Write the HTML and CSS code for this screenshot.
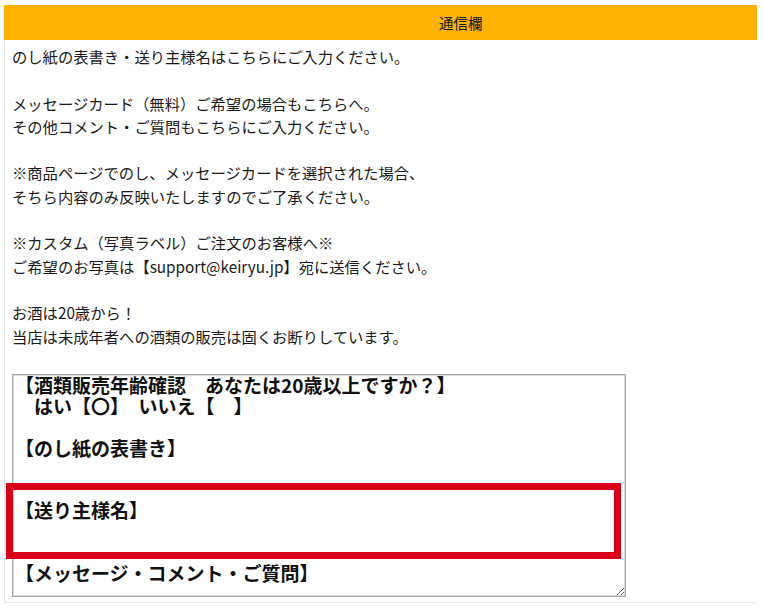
FILE: index.html
```html
<!DOCTYPE html>
<html lang="ja">

<head>
    <meta charset="UTF-8">
    <meta name="viewport" content="width=device-width, initial-scale=1.0">
    <title>通信欄</title>
    <link rel="stylesheet" href="styles.css">
</head>

<body>
    <div class="tsushin">
        <div class="baslik">通信欄</div>
        <div class="icerik">
            <p>のし紙の表書き・送り主様名はこちらにご入力ください。</p>
            <p>メッセージカード（無料）ご希望の場合もこちらへ。<br>その他コメント・ご質問もこちらにご入力ください。</p>
            <p>※商品ページでのし、メッセージカードを選択された場合、<br>そちら内容のみ反映いたしますのでご了承ください。</p>
            <p>※カスタム（写真ラベル）ご注文のお客様へ※<br>ご希望のお写真は【support@keiryu.jp】宛に送信ください。</p>
            <p>お酒は20歳から！<br>当店は未成年者への酒類の販売は固くお断りしています。</p>

            <div class="alan">
                <textarea class="mesaj" name="comment">【酒類販売年齢確認　あなたは20歳以上ですか？】
　はい【〇】　いいえ【　】

【のし紙の表書き】


【送り主様名】


【メッセージ・コメント・ご質問】</textarea>
                <!-- kırmızı işaret -->
                <div class="isaret"></div>
            </div>
        </div>
    </div>
</body>

</html>
```

FILE: styles.css
```css
body {
    margin: 0;
    background: #fff;
    font-family: "Noto Sans CJK JP", "Noto Sans", sans-serif;
    color: #222;
}

.tsushin {
    margin: 5px 0 0 4px;
    width: 753px;
}

.baslik {
    height: 35px;
    line-height: 35px;
    background-color: #ffb300;
    font-size: 14.5px;
    color: #111;
    padding-left: 435px;
}

.icerik {
    border-left: 1px solid #e3e3e3;
    border-bottom: 1px solid #e6e6e6;
    padding: 5px 0 5px 7px;
}

.icerik p {
    margin: 0 0 23.3px;
    font-size: 15.3px;
    line-height: 23.3px;
    color: #1a1a1a;
}

.icerik p:last-of-type {
    margin-bottom: 0;
}

.alan {
    position: relative;
    margin-top: 26.5px;
    width: 614px;
}

.mesaj {
    display: block;
    box-sizing: border-box;
    width: 614px;
    height: 223px;
    margin: 0;
    padding: 0 2px;
    border: 1px solid #a8a8a8;
    box-shadow: inset 0 0 0 1px #dadada;
    font-family: "Noto Sans CJK JP", sans-serif;
    font-size: 19px;
    font-weight: 700;
    line-height: 20.8px;
    color: #111;
    overflow: hidden;
}

.isaret {
    position: absolute;
    left: -6px;
    top: 109px;
    width: 615px;
    height: 76px;
    box-sizing: border-box;
    border: 7px solid #da0018;
}
```
